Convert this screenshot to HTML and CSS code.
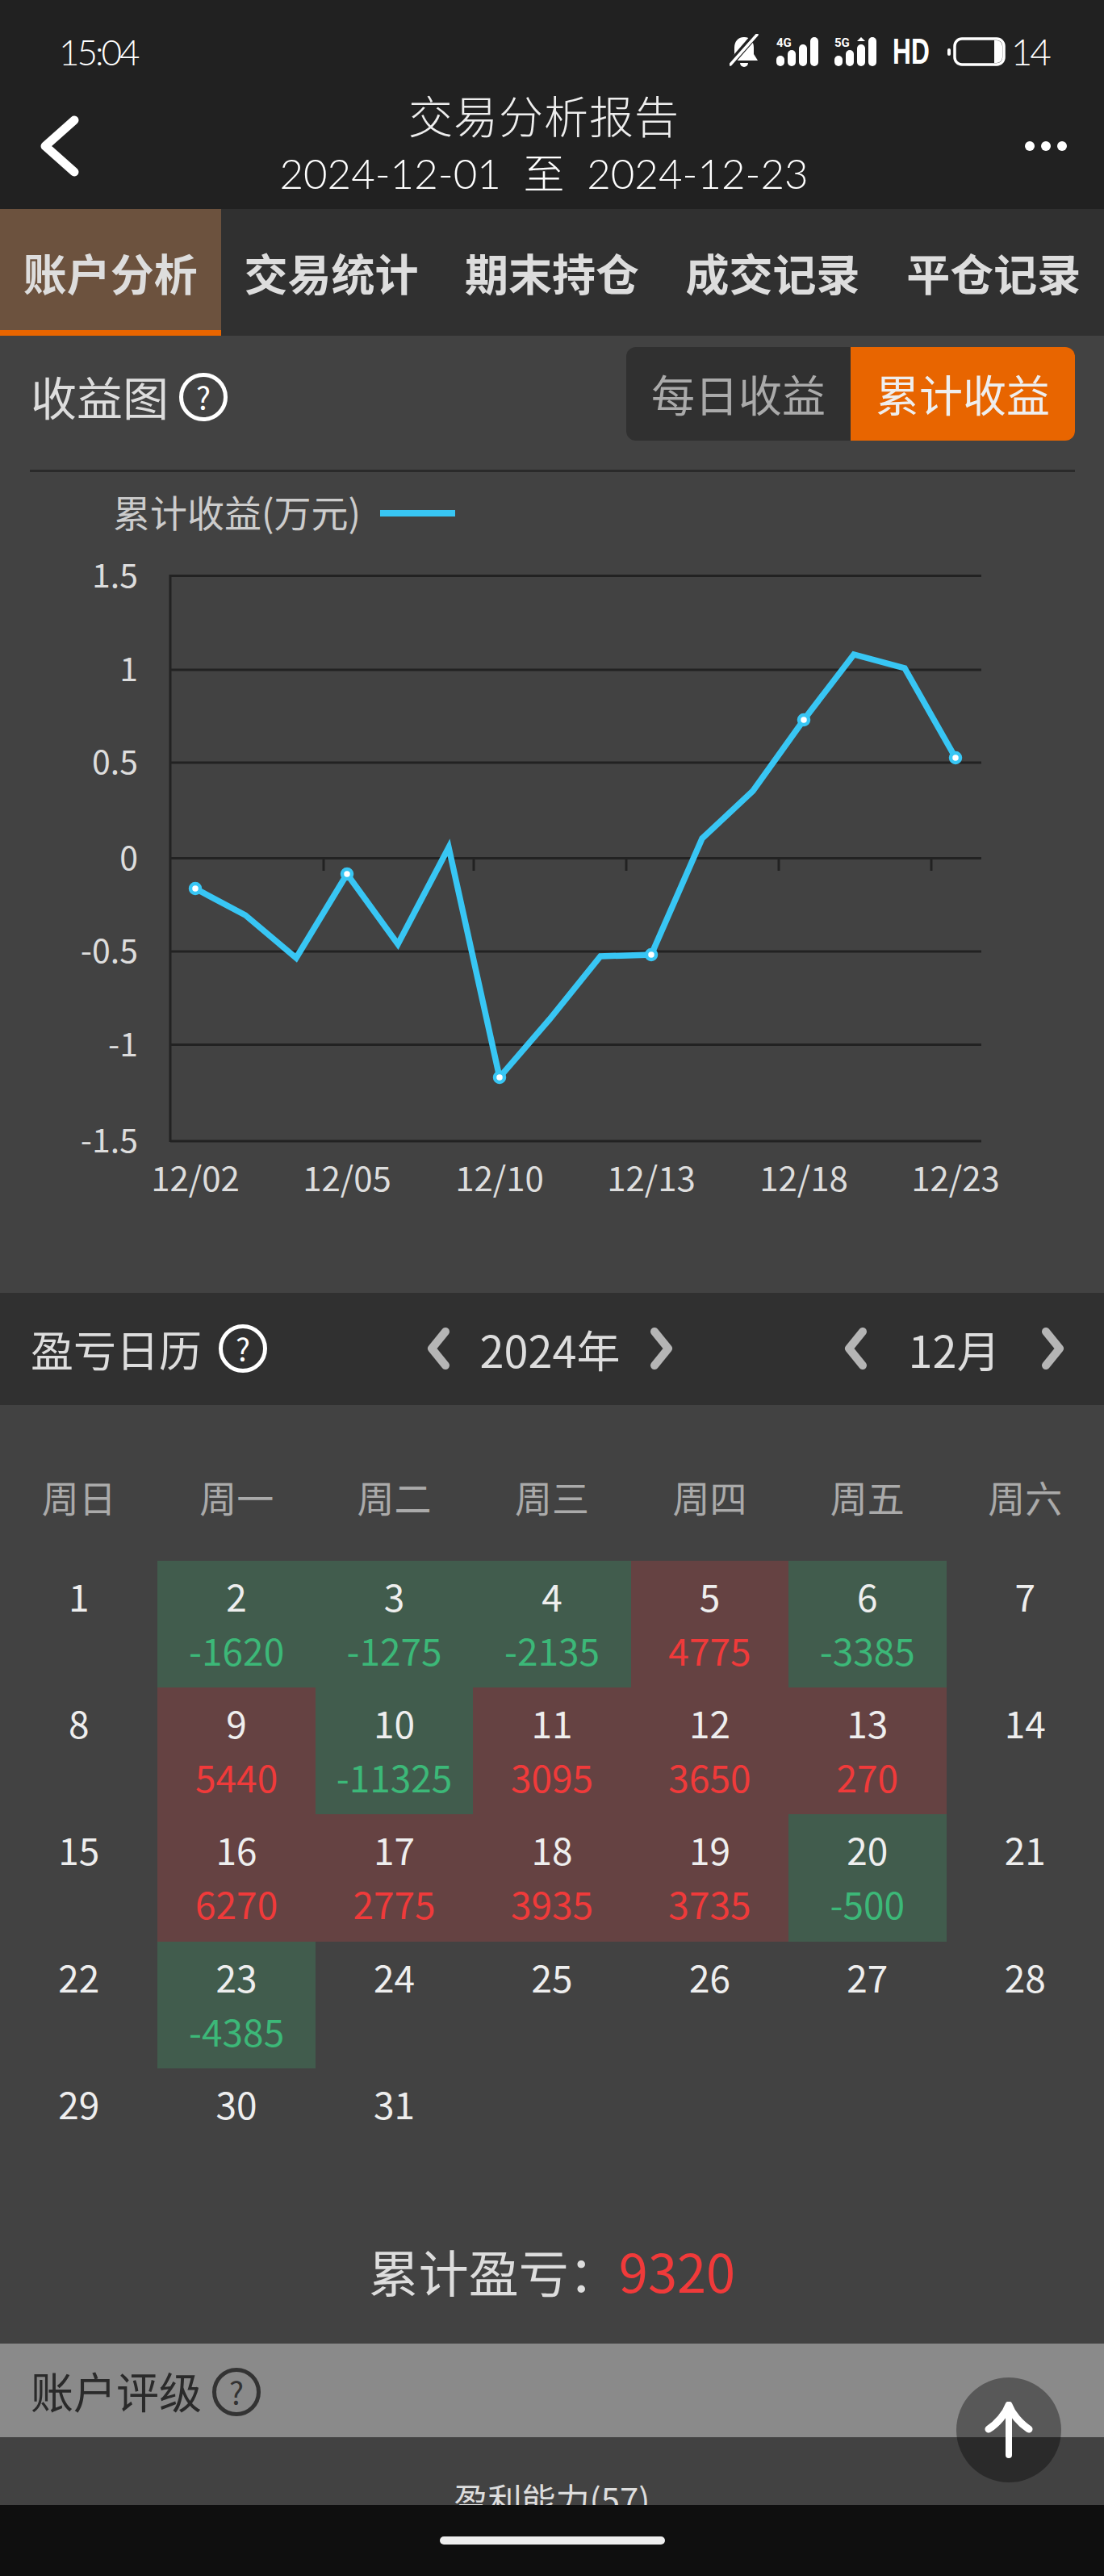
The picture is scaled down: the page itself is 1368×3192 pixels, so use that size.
FILE: index.html
```html
<!DOCTYPE html>
<html>
	<head>
		<meta charset="UTF-8">
		<title>交易分析报告</title>
		<link rel="stylesheet" href="styles.css">
	</head>
	<body>
		<div class="page">
			<div class="status">
				<span class="clock">15:04</span>
				<div class="status-icons">
					<svg class="ic-bell" width="36" height="44" viewBox="0 0 36 44">
						<path d="M18 4c-8 0-12 6-12 13v8l-5 8h34l-5-8v-8c0-7-4-13-12-13z" fill="#fff"/>
						<path d="M13 36h10a5 5 0 0 1-10 0z" fill="#fff"/>
						<path d="M33 0 0 38" stroke="#212121" stroke-width="8"/>
						<path d="M34 1 1 38" stroke="#fff" stroke-width="3.5" stroke-linecap="round"/>
					</svg>
					<svg class="ic-sig" width="52" height="42" viewBox="0 -6 52 42">
						<text x="0" y="12" class="sig-label">4G</text>
						<rect x="0" y="23" width="10" height="13" rx="5" fill="#fff"/>
						<rect x="14" y="16" width="10" height="20" rx="5" fill="#fff"/>
						<rect x="28" y="9" width="10" height="27" rx="5" fill="#fff"/>
						<rect x="42" y="0" width="10" height="36" rx="5" fill="#fff"/>
					</svg>
					<svg class="ic-sig" width="52" height="42" viewBox="0 -6 52 42">
						<text x="0" y="12" class="sig-label">5G</text>
						<rect x="0" y="23" width="10" height="13" rx="5" fill="#fff"/>
						<rect x="14" y="16" width="10" height="20" rx="5" fill="#fff"/>
						<path d="M33 0l5 5H28z" fill="#fff"/>
						<rect x="28" y="9" width="10" height="27" rx="5" fill="#fff"/>
						<rect x="42" y="0" width="10" height="36" rx="5" fill="#fff"/>
					</svg>
					<span class="hd">HD</span>
					<svg class="ic-batt" width="72" height="36" viewBox="0 0 72 36">
						<rect x="9" y="2" width="61" height="32" rx="9" fill="none" stroke="#fff" stroke-width="3.5"/>
						<path d="M58 4h3a7 7 0 0 1 7 7v14a7 7 0 0 1-7 7h-3z" fill="#fff"/>
						<rect x="0" y="14" width="4" height="9" rx="2" fill="#fff"/>
					</svg>
					<span class="batt-num">14</span>
				</div>
			</div>
			<div class="nav">
				<svg class="back" width="56" height="76" viewBox="0 0 56 76">
					<path d="M46 6 10 38l36 32" fill="none" stroke="#fff" stroke-width="11" stroke-linecap="round" stroke-linejoin="round"/>
				</svg>
				<div class="nav-title">
					<div class="nav-name">交易分析报告</div>
					<div class="nav-date">2024-12-01&nbsp; 至 &nbsp;2024-12-23</div>
				</div>
				<div class="more"><i></i><i></i><i></i></div>
			</div>
			<div class="tabs">
				<div class="tab on">账户分析</div>
				<div class="tab">交易统计</div>
				<div class="tab">期末持仓</div>
				<div class="tab">成交记录</div>
				<div class="tab">平仓记录</div>
			</div>

			<div class="chart-box">
				<div class="chart-head">
					<div class="sec-title big">收益图<span class="help">?</span></div>
					<div class="toggle">
						<div class="toggle-item">每日收益</div>
						<div class="toggle-item on">累计收益</div>
					</div>
				</div>
				<div class="line"></div>
				<svg class="chart" width="1368" height="1002" viewBox="0 600 1368 1002">
					<text x="140" y="653" class="legend">累计收益(万元)</text>
					<rect x="471" y="632" width="93" height="8" fill="#38c6f4"/>

					<g class="grid">
						<path d="M211 713.5H1216"/>
						<path d="M211 830H1216"/>
						<path d="M211 945H1216"/>
						<path d="M211 1063.5H1216"/>
						<path d="M211 1179H1216"/>
						<path d="M211 1294.5H1216"/>
						<path d="M211 1414H1216"/>
						<path d="M211 712V1415"/>
						<path d="M401 1063v16M587 1063v16M776 1063v16M965 1063v16M1154 1063v16"/>
					</g>

					<g class="y-label">
						<text x="171" y="728">1.5</text>
						<text x="171" y="844">1</text>
						<text x="171" y="959">0.5</text>
						<text x="171" y="1078">0</text>
						<text x="171" y="1193">-0.5</text>
						<text x="171" y="1309">-1</text>
						<text x="171" y="1428">-1.5</text>
					</g>
					<g class="x-label">
						<text x="242" y="1476">12/02</text>
						<text x="430" y="1476">12/05</text>
						<text x="619" y="1476">12/10</text>
						<text x="807" y="1476">12/13</text>
						<text x="996" y="1476">12/18</text>
						<text x="1184" y="1476">12/23</text>
					</g>

					<polyline class="curve" points="242,1101 304,1134 367,1187 430,1083 493,1170 556,1050 619,1335 681,1263 744,1185 807,1183 870,1039 933,980 996,892 1058,811 1121,828 1184,939"/>
					<g class="dots">
						<circle cx="242" cy="1101" r="6"/>
						<circle cx="430" cy="1083" r="6"/>
						<circle cx="619" cy="1335" r="6"/>
						<circle cx="807" cy="1183" r="6"/>
						<circle cx="996" cy="892" r="6"/>
						<circle cx="1184" cy="939" r="6"/>
					</g>
				</svg>
			</div>

			<div class="cal-head">
				<div class="sec-title cal-title">盈亏日历<span class="help">?</span></div>
				<div class="picker year">
					<svg width="30" height="52" viewBox="0 0 30 52"><path d="M24 5 7 26l17 21" class="chev"/></svg>
					<span>2024年</span>
					<svg width="30" height="52" viewBox="0 0 30 52"><path d="M6 5l17 21L6 47" class="chev"/></svg>
				</div>
				<div class="picker month">
					<svg width="30" height="52" viewBox="0 0 30 52"><path d="M24 5 7 26l17 21" class="chev"/></svg>
					<span>12月</span>
					<svg width="30" height="52" viewBox="0 0 30 52"><path d="M6 5l17 21L6 47" class="chev"/></svg>
				</div>
			</div>

			<div class="cal">
				<div class="weeks">
					<div>周日</div><div>周一</div><div>周二</div><div>周三</div><div>周四</div><div>周五</div><div>周六</div>
				</div>
				<div class="days">
					<div class="day"><b>1</b></div>
					<div class="day loss"><b>2</b><span>-1620</span></div>
					<div class="day loss"><b>3</b><span>-1275</span></div>
					<div class="day loss"><b>4</b><span>-2135</span></div>
					<div class="day gain"><b>5</b><span>4775</span></div>
					<div class="day loss"><b>6</b><span>-3385</span></div>
					<div class="day"><b>7</b></div>

					<div class="day"><b>8</b></div>
					<div class="day gain"><b>9</b><span>5440</span></div>
					<div class="day loss"><b>10</b><span>-11325</span></div>
					<div class="day gain"><b>11</b><span>3095</span></div>
					<div class="day gain"><b>12</b><span>3650</span></div>
					<div class="day gain"><b>13</b><span>270</span></div>
					<div class="day"><b>14</b></div>

					<div class="day"><b>15</b></div>
					<div class="day gain"><b>16</b><span>6270</span></div>
					<div class="day gain"><b>17</b><span>2775</span></div>
					<div class="day gain"><b>18</b><span>3935</span></div>
					<div class="day gain"><b>19</b><span>3735</span></div>
					<div class="day loss"><b>20</b><span>-500</span></div>
					<div class="day"><b>21</b></div>

					<div class="day"><b>22</b></div>
					<div class="day loss"><b>23</b><span>-4385</span></div>
					<div class="day"><b>24</b></div>
					<div class="day"><b>25</b></div>
					<div class="day"><b>26</b></div>
					<div class="day"><b>27</b></div>
					<div class="day"><b>28</b></div>

					<div class="day"><b>29</b></div>
					<div class="day"><b>30</b></div>
					<div class="day"><b>31</b></div>
				</div>
				<div class="total">累计盈亏：<em>9320</em></div>
			</div>

			<div class="rate-head">账户评级<span class="help">?</span></div>
			<div class="rate-body">盈利能力(57)</div>
			<div class="home-bar"><i></i></div>

			<div class="to-top">
				<svg width="60" height="70" viewBox="0 0 60 70">
					<path d="M30 66V6" stroke="#fff" stroke-width="8" stroke-linecap="round"/>
					<path d="M5 34C16 27 26 15 30 4c4 11 14 23 25 30" fill="none" stroke="#fff" stroke-width="9" stroke-linecap="round" stroke-linejoin="round"/>
				</svg>
			</div>
		</div>
	</body>
</html>
```

FILE: styles.css
```css
*{margin:0;padding:0;box-sizing:border-box;}
body{background:#424242;font-family:"Noto Sans CJK SC",sans-serif;color:#ddd;}
.page{position:relative;width:1368px;height:3192px;overflow:hidden;background:#424242;display:flex;flex-direction:column;}

/* status bar + title */
.status{height:104px;padding:24px 68px 0 73px;background:#212121;display:flex;justify-content:space-between;color:#fff;}
.clock{font:300 44px/80px "Lato","Noto Sans CJK SC",sans-serif;letter-spacing:-3px;}
.status-icons{display:flex;align-items:center;height:80px;}
.ic-bell{margin-right:22px;}
.ic-sig{margin-right:20px;margin-top:-6px;}
.sig-label{font:bold 15px "Roboto",sans-serif;fill:#fff;}
.hd{font:bold 44px/80px "Liberation Sans",sans-serif;transform:scaleX(.72);transform-origin:left center;width:46px;margin-right:22px;}
.ic-batt{margin-right:7px;}
.batt-num{font:300 46px/80px "Lato",sans-serif;letter-spacing:-3px;}

.nav{height:155px;background:#212121;padding:0 46px;display:grid;grid-template-columns:1fr auto 1fr;align-items:center;}
.nav-title{text-align:center;margin:-6px 0 0 -20px;}
.nav-name{font:300 55px/74px "Noto Sans CJK SC",sans-serif;letter-spacing:1px;color:#eee;}
.nav-date{font:300 51px/74px "Lato","Noto Sans CJK SC",sans-serif;color:#fff;}
.more{justify-self:end;display:flex;gap:8px;}
.more i{width:12px;height:12px;border-radius:50%;background:#fff;}

.tabs{height:157px;background:#303030;display:grid;grid-template-columns:repeat(5,1fr);grid-template-rows:157px;}
.tab{height:157px;font-size:54px;font-weight:bold;line-height:158px;text-align:center;color:#ddd;white-space:nowrap;}
.tab.on{background:#6c523e;border-bottom:7px solid #e86500;}

/* chart */
.chart-box{height:1186px;}
.chart-head{padding:14px 36px 0 38px;height:130px;display:flex;justify-content:space-between;}
.sec-title{display:flex;align-items:center;font-size:53px;color:#ddd;height:116px;}
.sec-title.big{font-size:57px;padding-top:5px;}
.help{width:60px;height:60px;margin-left:21px;border:5px solid #fff;border-radius:50%;color:#fff;font-size:38px;line-height:50px;text-align:center;}
.big .help{margin:4px 0 0 13px;}
.toggle{display:flex;height:116px;border-radius:12px;overflow:hidden;background:#303030;font-size:54px;line-height:116px;}
.toggle-item{width:278px;text-align:center;color:#aaa;}
.toggle-item.on{background:#e86500;color:#eee;}
.line{height:3px;margin:36px 36px 15px 37px;background:#2a2a2a;}
.chart{display:block;}
.legend{font-size:46px;fill:#ccc;}
.grid path{stroke:#222;stroke-width:3;fill:none;}
.y-label text{font-size:41px;fill:#ddd;text-anchor:end;}
.x-label text{font-size:42px;fill:#ddd;text-anchor:middle;}
.curve{fill:none;stroke:#38c6f4;stroke-width:7.5;stroke-linejoin:miter;}
.dots circle{fill:#fff;stroke:#38c6f4;stroke-width:4.5;}

/* calendar */
.cal-head{height:139px;background:#303030;padding-left:38px;display:flex;align-items:center;}
.cal-title{width:490px;}
.picker{display:flex;align-items:center;justify-content:space-between;font-size:54px;color:#ddd;}
.year{width:307px;}
.month{width:275px;margin-left:210px;}
.chev{fill:none;stroke:#b5b5b5;stroke-width:10;stroke-linecap:round;stroke-linejoin:round;}

.cal{padding-top:83px;}
.weeks{display:grid;grid-template-columns:repeat(7,1fr);height:60px;margin-bottom:50px;font-size:46px;line-height:60px;text-align:center;color:#aaa;}
.days{display:grid;grid-template-columns:repeat(7,1fr);grid-template-rows:repeat(5,157.3px);}
.day{padding-top:10px;text-align:center;font-size:46px;line-height:67px;}
.day b{display:block;font-weight:normal;color:#eee;}
.day span{display:block;}
.loss{background:#415c4d;}
.loss span{color:#3cb878;}
.gain{background:#654242;}
.gain span{color:#f03a3a;}
.total{margin:58px 0 56px;height:70px;font-size:62px;line-height:70px;text-align:center;color:#ddd;}
.total em{font-style:normal;font-size:65px;color:#f03a3a;}

/* rating */
.rate-head{height:116px;background:#8a8a8a;padding-left:38px;display:flex;align-items:center;font-size:53px;color:#2a2a2a;}
.rate-head .help{margin:4px 0 0 13px;border-color:#333;color:#333;}
.rate-body{height:84px;padding-top:48px;text-align:center;font-size:42px;line-height:56px;overflow:hidden;color:#ddd;}
.home-bar{height:88px;background:#0f0f0f;display:flex;justify-content:center;padding-top:39px;}
.home-bar i{width:279px;height:10px;border-radius:5px;background:#eee;}

.to-top{position:absolute;left:1185px;top:2946px;width:130px;height:130px;border-radius:50%;background:rgba(0,0,0,.36);display:flex;align-items:center;justify-content:center;}
```
